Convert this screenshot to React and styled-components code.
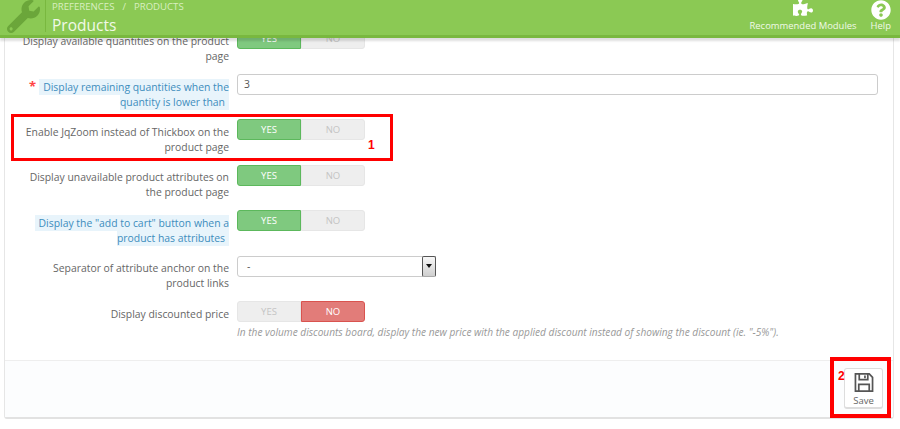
import styled, { createGlobalStyle } from 'styled-components'
import { FaWrench, FaPuzzlePiece, FaQuestionCircle } from 'react-icons/fa'

const GlobalStyle = createGlobalStyle`
    html, body {
        margin: 0;
        padding: 0;
        background: #fff;
        font-family: 'Open Sans', 'Liberation Sans', sans-serif;
        overflow: hidden;
    }
`

const Page = styled.div`
    position: relative;
    width: 900px;
    height: 429px;
    overflow: hidden;
    padding: 0 6px 0 4px;
    box-sizing: border-box;
`

const Header = styled.header`
    position: absolute;
    top: 0;
    left: 0;
    right: 0;
    height: 35px;
    display: flex;
    align-items: stretch;
    background: #8bc954;
    border-bottom: 3px solid #79b83f;
    box-shadow: 0 3px 2px rgba(0, 0, 0, 0.13);
    z-index: 2;
`

const Logo = styled.div`
    width: 46px;
    height: 32px;
    flex: none;
    border-right: 1px solid #79b83f;
    color: #6ba63a;
    box-sizing: border-box;
    padding: 0 0 0 7px;
    font-size: 33px;
    line-height: 1;
`

const HeaderTitle = styled.div`
    flex: 1;
    padding: 1px 0 0 6px;
`

const Crumbs = styled.div`
    display: flex;
    gap: 8px;
    font-size: 9.6px;
    line-height: 12px;
    color: #d9efc1;
    text-transform: uppercase;
`

const Title = styled.h1`
    margin: 2px 0 0;
    font-size: 15.5px;
    line-height: 20px;
    font-weight: 400;
    color: #f1f9e8;
`

const HeaderLinks = styled.div`
    display: flex;
    gap: 14px;
    padding-right: 9px;
`

const HeaderLink = styled.a`
    display: flex;
    flex-direction: column;
    align-items: center;
    font-size: 9.45px;
    line-height: 12px;
    color: #f1f9e8;
    white-space: nowrap;
    svg {
        font-size: 20px;
        height: 20px;
        margin-top: ${(p) => (p.$raised ? '-3px' : '0')};
        margin-bottom: ${(p) => (p.$raised ? '3px' : '0')};
        color: #fff;
    }
`

const Panel = styled.section`
    height: 419px;
    box-sizing: border-box;
    display: flex;
    flex-direction: column;
    border: 1px solid #e6e6e6;
    border-top: 0;
    border-bottom: 2px solid #e2e2e2;
    border-radius: 0 0 3px 3px;
    background: #fff;
`

const Form = styled.div`
    flex: 1;
    padding-top: 28px;
`

const Row = styled.div`
    display: flex;
    height: 45.5px;
`

const Label = styled.label`
    flex: none;
    width: 224px;
    padding: 5.5px 0 0 14px;
    font-size: 10.4px;
    line-height: 15.3px;
    color: #666;
    text-align: right;
    box-sizing: border-box;
`

const Hint = styled.span`
    background: #e8f4fb;
    color: #3d8dbd;
    padding: 1px 4px;
`

const Star = styled.span`
    color: #f44;
    font-size: 13px;
    font-weight: 700;
    margin-right: 3px;
`

const Control = styled.div`
    margin-left: 8px;
    flex: 1;
    padding-right: 15px;
`

const Switch = styled.div`
    display: flex;
    width: 128px;
    height: 21px;
`

const SwitchPart = styled.span`
    flex: 1;
    display: flex;
    align-items: center;
    justify-content: center;
    box-sizing: border-box;
    font-size: 9.5px;
    border-radius: ${(p) => (p.$side === 'left' ? '3px 0 0 3px' : '0 3px 3px 0')};
    background: ${(p) =>
        p.$on ? (p.$tone === 'red' ? '#e27c79' : '#7fc97f') : '#eeeeee'};
    border: 1px solid
        ${(p) =>
            p.$on ? (p.$tone === 'red' ? '#d9534f' : '#5cb85c') : '#e6e6e6'};
    color: ${(p) => (p.$on ? '#fff' : '#c4c4c4')};
`

const TextInput = styled.input`
    display: block;
    width: 100%;
    height: 21px;
    box-sizing: border-box;
    padding: 0 6px;
    border: 1px solid #ccc;
    border-radius: 3px;
    background: #fff;
    font: 10.4px 'Open Sans', sans-serif;
    color: #555;
    outline: none;
`

const Select = styled.div`
    display: flex;
    align-items: center;
    justify-content: space-between;
    width: 199px;
    height: 21px;
    box-sizing: border-box;
    padding-left: 9px;
    border: 1px solid #ccc;
    border-radius: 3px;
    font-size: 10.4px;
    color: #555;
`

const SelectButton = styled.span`
    width: 14px;
    height: 21px;
    margin-right: -1px;
    box-sizing: border-box;
    display: flex;
    align-items: center;
    justify-content: center;
    border: 1px solid #555;
    border-bottom-color: #aaa;
    border-radius: 2px;
    background: linear-gradient(#f8f8f8, #cfcfcf);
    &::after {
        content: '';
        border-left: 3px solid transparent;
        border-right: 3px solid transparent;
        border-top: 4px solid #111;
    }
`

const Help = styled.p`
    margin: 3px 0 0;
    font-size: 10.13px;
    line-height: 14px;
    font-style: italic;
    color: #999;
    white-space: nowrap;
`

const Footer = styled.footer`
    height: 57px;
    flex: none;
    display: flex;
    justify-content: flex-end;
    padding: 7px 10px 0 0;
    box-sizing: border-box;
    background: #fcfdfe;
    border-top: 1px solid #eee;
`

const SaveButton = styled.button`
    width: 39px;
    height: 41px;
    padding: 4px 0 0;
    display: flex;
    flex-direction: column;
    align-items: center;
    gap: 3px;
    box-sizing: border-box;
    background: #fff;
    border: 1px solid #ddd;
    border-bottom-width: 2px;
    border-radius: 3px;
    font: 9.5px/12px 'Open Sans', sans-serif;
    color: #666;
`

const Callout = styled.div`
    position: absolute;
    box-sizing: border-box;
    left: ${(p) => p.$x}px;
    top: ${(p) => p.$y}px;
    width: ${(p) => p.$w}px;
    height: ${(p) => p.$h}px;
    border: 3px solid #f00;
    border-width: ${(p) => p.$b}px;
    z-index: 1;
`

const CalloutNumber = styled.span`
    position: absolute;
    left: ${(p) => p.$x}px;
    top: ${(p) => p.$y}px;
    font: bold 12px/14px 'Liberation Sans', sans-serif;
    color: #f00;
    z-index: 1;
`

function YesNo({ off }) {
    return (
        <Switch>
            <SwitchPart $side='left' $on={!off}>YES</SwitchPart>
            <SwitchPart $side='right' $on={off} $tone='red'>NO</SwitchPart>
        </Switch>
    )
}

function SaveIcon() {
    return (
        <svg width='20' height='20' viewBox='0 0 20 20' fill='none' stroke='#555' strokeWidth='1.8'>
            <path d='M1 1h14.5l3.5 3.5V19H1z' />
            <path d='M5 1v6h9V1' />
            <path d='M11 2.5v3' />
            <path d='M4.5 19v-7h11v7' />
        </svg>
    )
}

export default function App() {
    return (
        <Page>
            <GlobalStyle />
            <Header>
                <Logo><FaWrench /></Logo>
                <HeaderTitle>
                    <Crumbs>
                        <span>Preferences</span>
                        <span>/</span>
                        <span>Products</span>
                    </Crumbs>
                    <Title>Products</Title>
                </HeaderTitle>
                <HeaderLinks>
                    <HeaderLink $raised><FaPuzzlePiece />Recommended Modules</HeaderLink>
                    <HeaderLink><FaQuestionCircle />Help</HeaderLink>
                </HeaderLinks>
            </Header>

            <Panel>
                <Form>
                    <Row>
                        <Label>Display available quantities on the product page</Label>
                        <Control><YesNo /></Control>
                    </Row>
                    <Row>
                        <Label>
                            <Star>*</Star>
                            <Hint>Display remaining quantities when the quantity is lower than</Hint>
                        </Label>
                        <Control><TextInput readOnly value='3' /></Control>
                    </Row>
                    <Row>
                        <Label>Enable JqZoom instead of Thickbox on the product page</Label>
                        <Control><YesNo /></Control>
                    </Row>
                    <Row>
                        <Label>Display unavailable product attributes on the product page</Label>
                        <Control><YesNo /></Control>
                    </Row>
                    <Row>
                        <Label>
                            <Hint>Display the "add to cart" button when a product has attributes</Hint>
                        </Label>
                        <Control><YesNo /></Control>
                    </Row>
                    <Row>
                        <Label>Separator of attribute anchor on the product links</Label>
                        <Control>
                            <Select>-<SelectButton /></Select>
                        </Control>
                    </Row>
                    <Row>
                        <Label>Display discounted price</Label>
                        <Control>
                            <YesNo off />
                            <Help>
                                In the volume discounts board, display the new price with the applied discount instead of showing the discount (ie. "-5%").
                            </Help>
                        </Control>
                    </Row>
                </Form>
                <Footer>
                    <SaveButton>
                        <SaveIcon />
                        Save
                    </SaveButton>
                </Footer>
            </Panel>

            <Callout $x={11} $y={114} $w={382} $h={47} $b={3} />
            <CalloutNumber $x={368} $y={138}>1</CalloutNumber>
            <Callout $x={830} $y={357} $w={61} $h={61} $b={4} />
            <CalloutNumber $x={838} $y={369}>2</CalloutNumber>
        </Page>
    )
}
